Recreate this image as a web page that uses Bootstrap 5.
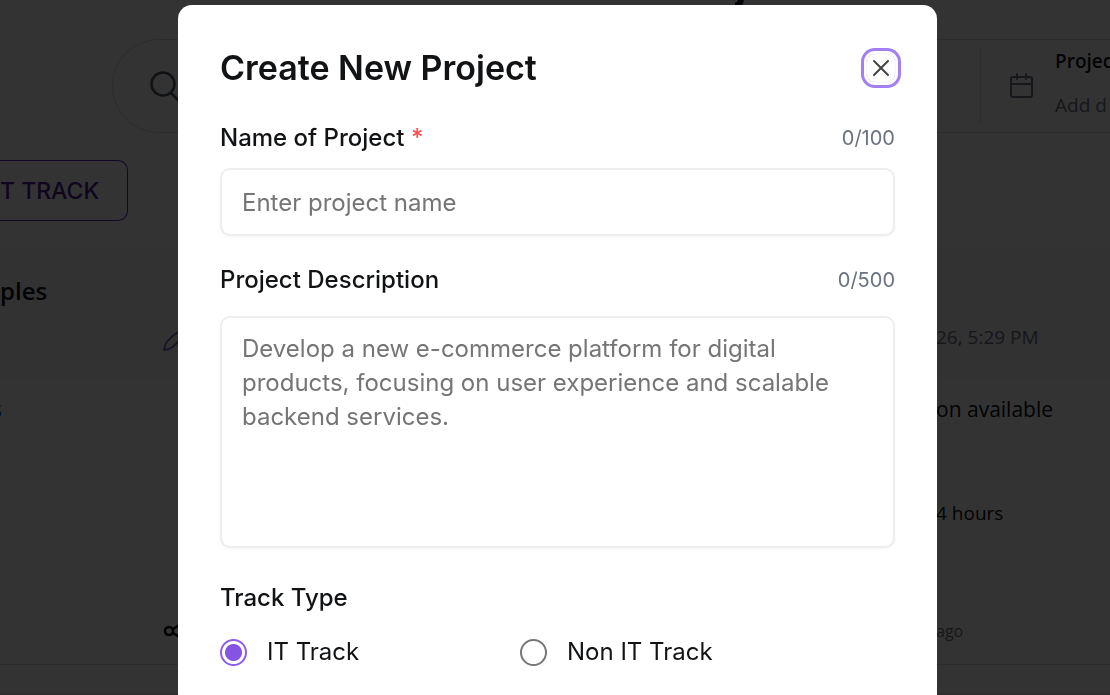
<!DOCTYPE html>
<html lang="en">
<head>
<meta charset="utf-8">
<meta name="viewport" content="width=device-width, initial-scale=1">
<title>Create New Project</title>
<link href="https://cdn.jsdelivr.net/npm/bootstrap@5.3.0/dist/css/bootstrap.min.css" rel="stylesheet">
<style>
  body { font-family: "Open Sans", "Noto Sans", sans-serif; font-size: 19px; line-height: 30px; color: #0c0f14; }
  .page-top { height: 39px; padding-right: 364px; }
  .page-title { height: 5px; font: 700 40px/40px Inter, sans-serif; }
  .search-pill { height: 94px; margin-left: 112px; border: 1px solid #dcdcdc; border-right: 0; border-radius: 47px 0 0 47px; padding-left: 36px; }
  .date-part { width: 130px; height: 78px; border-left: 1px solid #dcdcdc; padding-left: 28px; gap: 20px; }
  .date-text { line-height: 44px; padding-bottom: 6px; }
  .soft { color: #6b7280; }
  .btn-track { width: 128px; height: 61px; margin: 27px 0; border: 1px solid #5b21b6; border-left: 0; border-radius: 0 10px 10px 0; color: #4c1d95; font: 500 23px/30px Inter, sans-serif; padding: 0; }
  .btn-track:hover { color: #4c1d95; border-color: #5b21b6; }
  .card-top { height: 130px; background: #f8f8ff; }
  .side-right { width: 174px; }
  .side-icon { margin: 20px 0 0 162px; }
  .name-text { font-size: 24px; }
  .mid-text { font-size: 21px; }
  .cut-text { margin-left: -8px; color: #1d4ed8; }
  .hours-row { padding-top: 74px; }
  .line-row { border-bottom: 1px solid #dcdcdc; min-height: 30px; }
  .foot-row { padding: 88px 0 18px; }
  .share-icon { margin-left: 162px; }
  .modal-backdrop.show { opacity: .8; }
  #createProject { padding-left: 5px; overflow: hidden; font-family: Inter, sans-serif; font-size: 24px; line-height: 36px; color: #111315; }
  #createProject .modal-dialog { max-width: 759px; margin: 5px auto 0; }
  #createProject .modal-content { border: 0; border-radius: 14px 14px 0 0; padding: 42px 42px 24px; min-height: 100vh; color: inherit; }
  .dialog-head { margin-bottom: 31px; }
  .dialog-title { font-size: 34px; font-weight: 600; line-height: 42px; }
  .btn-x { width: 28px; height: 28px; border-radius: 8px; color: #444; box-shadow: 0 0 0 1px #f7f3ff, 0 0 0 3px #fff, 0 0 0 6px #a27ff2; }
  .field-label { font-size: 24px; line-height: 36px; font-weight: 500; margin: 0; }
  .need { color: #ff4d4f; }
  .counter { font-size: 20px; color: #6b7280; }
  .field-box.form-control { border: 2px solid #eee; border-radius: 10px; padding: 14px 20px; font-size: 24px; line-height: 34px; box-shadow: 0 1px 2px #0000000a; }
  .field-box::placeholder { color: #757575; opacity: 1; }
  input.field-box { height: 68px; margin: 12px 0 26px; }
  textarea.field-box.form-control { height: 232px; resize: none; margin: 18px 0 32px; }
  .choices { padding-top: 18px; }
  .choice { width: 300px; gap: 20px; }
  .track-radio { appearance: none; width: 27px; height: 27px; border: 2px solid #767676; border-radius: 50%; margin: 0; background: #fff; flex: none; }
  .track-radio:checked { border-color: #8f5cf0; background: radial-gradient(circle, #8554e3 8px, #fff 9px); }
</style>
</head>
<body class="vh-100 overflow-hidden">

<main>
  <header class="page-top d-flex justify-content-end">
    <div class="page-title d-flex align-items-end overflow-hidden">j</div>
  </header>

  <section class="search-pill d-flex align-items-center justify-content-between">
    <svg width="32" height="32" viewBox="0 0 32 32" fill="none" stroke="#4b5563" stroke-width="2.500" stroke-linecap="round"><circle cx="14" cy="14" r="11.500"/><path d="M22 23l7 7"/></svg>
    <div class="date-part d-flex align-items-center overflow-hidden">
      <svg class="flex-shrink-0" width="26" height="26" viewBox="0 0 26 26" fill="none" stroke="#6b7280" stroke-width="2" stroke-linecap="round" stroke-linejoin="round"><rect x="2" y="4" width="21" height="20" rx="2"/><path d="M2 11h21M8 1v5M17 1v5"/></svg>
      <div class="date-text flex-shrink-0 text-nowrap"><div class="fw-semibold">Projec</div><div class="soft">Add d</div></div>
    </div>
  </section>

  <button type="button" class="btn btn-track d-block text-start">T TRACK</button>

  <section>
    <div class="card-top d-flex justify-content-between">
      <div class="pt-4 d-flex flex-column">
        <div class="name-text fw-semibold pt-1">ples</div>
        <svg class="side-icon" width="20" height="26" viewBox="0 0 20 26" fill="none" stroke="#7c62b0" stroke-width="2" stroke-linejoin="round"><path d="M2 24c0-6 5-12 14-18l4 4C15 18 9 24 2 24z"/></svg>
      </div>
      <div class="side-right soft d-flex align-items-center pt-5">26, 5:29 PM</div>
    </div>
    <div class="mid-text d-flex justify-content-between pt-3">
      <div class="cut-text">s</div>
      <div class="side-right">on available</div>
    </div>
    <div class="hours-row d-flex justify-content-end">
      <div class="side-right">4 hours</div>
    </div>
    <div class="line-row foot-row d-flex justify-content-between align-items-center">
      <svg class="share-icon" width="24" height="24" viewBox="0 0 24 24" fill="none" stroke="#000" stroke-width="2.500"><circle cx="7" cy="12" r="4"/><path d="M11 10l8-5M11 14l8 5"/></svg>
      <div class="side-right soft fs-6">ago</div>
    </div>
    <div class="line-row"></div>
  </section>
</main>

<div class="modal-backdrop show"></div>

<div class="modal d-block" id="createProject" role="dialog" aria-modal="true" aria-labelledby="dialogTitle">
  <div class="modal-dialog">
    <form class="modal-content">
      <div class="dialog-head d-flex justify-content-between align-items-center">
        <h1 class="dialog-title m-0" id="dialogTitle">Create New Project</h1>
        <button type="button" class="btn-x btn border-0 p-0 d-flex align-items-center justify-content-center" aria-label="Close">
          <svg width="18" height="18" viewBox="0 0 18 18" fill="none" stroke="currentColor" stroke-width="2" stroke-linecap="round"><path d="M2 2l14 14M16 2L2 16"/></svg>
        </button>
      </div>

      <div class="d-flex justify-content-between">
        <label class="field-label" for="projectName">Name of Project <span class="need">*</span></label>
        <span class="counter">0/100</span>
      </div>
      <input class="field-box form-control" id="projectName" type="text" placeholder="Enter project name">

      <div class="d-flex justify-content-between">
        <label class="field-label" for="projectDescription">Project Description</label>
        <span class="counter">0/500</span>
      </div>
      <textarea class="field-box form-control" id="projectDescription" placeholder="Develop a new e-commerce platform for digital products, focusing on user experience and scalable backend services."></textarea>

      <fieldset>
        <legend class="field-label">Track Type</legend>
        <div class="choices d-flex">
          <div class="choice d-flex align-items-center"><input class="track-radio" type="radio" name="track" id="trackIt" checked><label for="trackIt">IT Track</label></div>
          <div class="choice d-flex align-items-center"><input class="track-radio" type="radio" name="track" id="trackNon"><label for="trackNon">Non IT Track</label></div>
        </div>
      </fieldset>
    </form>
  </div>
</div>

<script src="https://cdn.jsdelivr.net/npm/bootstrap@5.3.0/dist/js/bootstrap.bundle.min.js"></script>
</body>
</html>
